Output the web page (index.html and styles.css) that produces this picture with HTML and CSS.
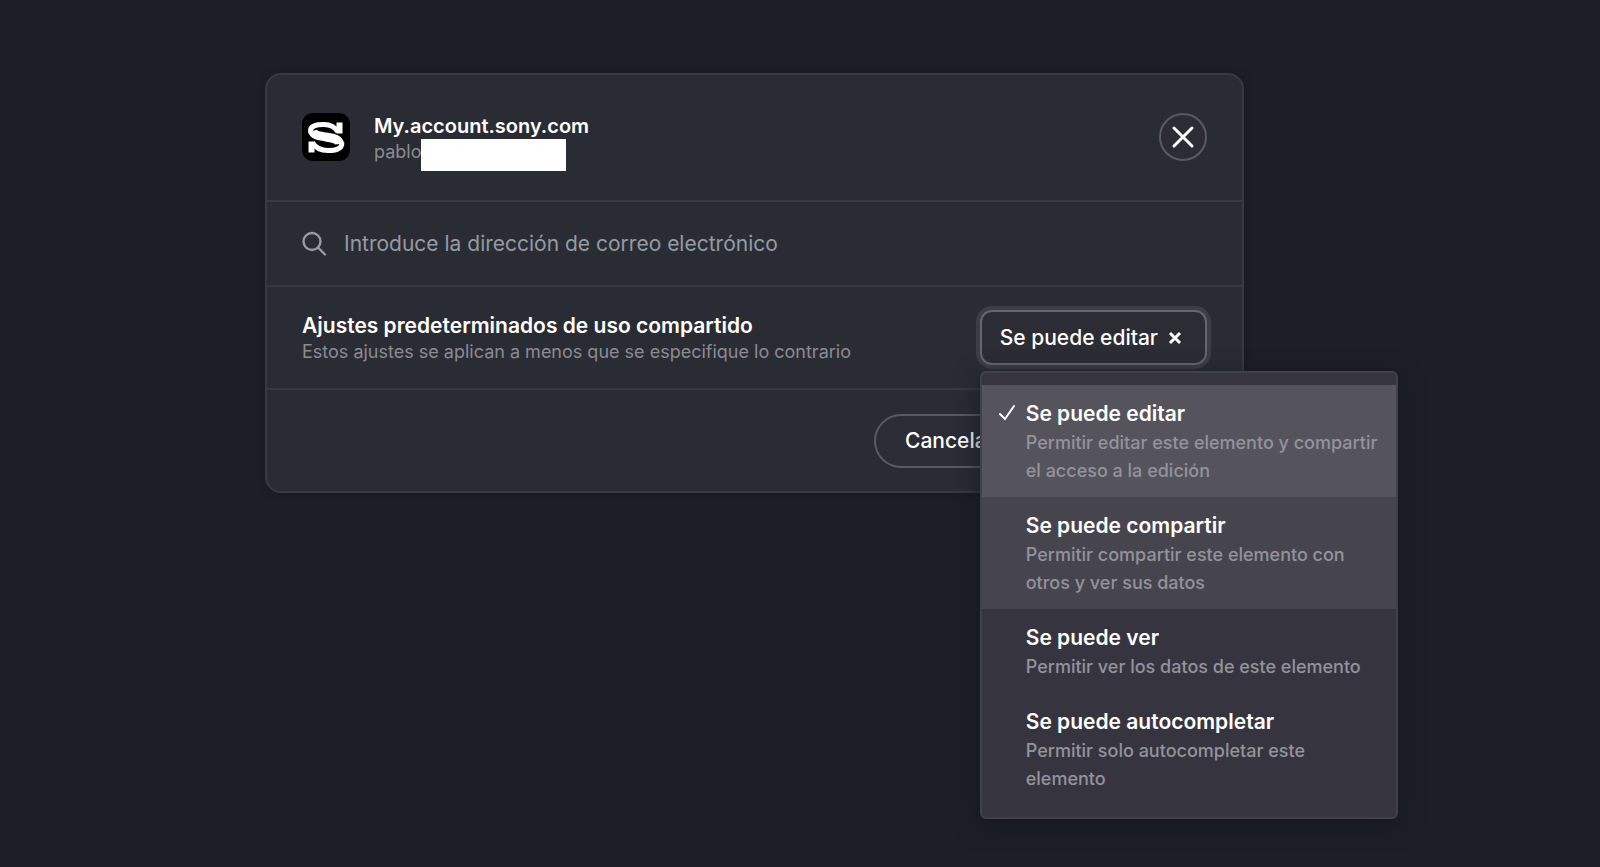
FILE: index.html
```html
<!DOCTYPE html>
<html lang="es">
<head>
<meta charset="utf-8">
<meta name="viewport" content="width=device-width, initial-scale=1">
<title>Compartir elemento</title>
<link rel="stylesheet" href="styles.css">
</head>
<body>
<main class="page">
  <section class="dialog" role="dialog" aria-labelledby="item-name">
    <header class="row header">
      <svg class="logo" viewBox="0 0 48 48" aria-hidden="true">
        <rect width="48" height="48" rx="11" fill="#000"/>
        <g fill="none" stroke="#fff">
          <path d="M10.500 18C12 23 19 22.800 24 24C30 25.200 37 25.500 37.500 31" stroke-width="9"/>
          <path d="M8.500 19C7.500 12.500 15 11.500 22 11.500C29 11.500 33 14 36 19M39.800 29.500C40.500 36.500 32.500 37.500 26 37.500C18.500 37.500 13.500 35 10.500 29.500" stroke-width="5"/>
          <path d="M37.500 9.500V20.500M9.500 28.500V39.500" stroke-width="6"/>
        </g>
      </svg>
      <div class="identity">
        <h1 class="title title-item" id="item-name">My.account.sony.com</h1>
        <p class="subtitle"><span class="email">pablo<span class="redaction"></span></span></p>
      </div>
      <button class="close" type="button" aria-label="Cerrar">
        <svg viewBox="0 0 24 24" aria-hidden="true"><path d="M3 3L21 21M21 3L3 21"/></svg>
      </button>
    </header>

    <div class="row search">
      <svg class="search-icon" viewBox="0 0 24 24" aria-hidden="true"><circle cx="10" cy="9.500" r="8.500"/><path d="M16 15.500L23 22.500"/></svg>
      <input class="search-input" type="email" aria-label="Correo electrónico" placeholder="Introduce la dirección de correo electrónico">
    </div>

    <div class="row settings">
      <div class="settings-text">
        <h2 class="title">Ajustes predeterminados de uso compartido</h2>
        <p class="subtitle">Estos ajustes se aplican a menos que se especifique lo contrario</p>
      </div>
      <div class="picker">
        <button class="picker-button" type="button" aria-haspopup="listbox" aria-expanded="true">
          Se puede editar
          <svg viewBox="0 0 14 14" aria-hidden="true"><path d="M2 2L12 12M12 2L2 12"/></svg>
        </button>
        <div class="menu" role="listbox" aria-label="Permisos">
          <button class="option selected" type="button" role="option" aria-selected="true">
            <svg class="check" viewBox="0 0 16 16" aria-hidden="true"><path d="M1 9L6 14L15 1"/></svg>
            <span class="option-name">Se puede editar</span>
            <span class="option-help">Permitir editar este elemento y compartir el acceso a la edición</span>
          </button>
          <button class="option hovered" type="button" role="option" aria-selected="false">
            <span class="option-name">Se puede compartir</span>
            <span class="option-help">Permitir compartir este elemento con otros y ver sus datos</span>
          </button>
          <button class="option" type="button" role="option" aria-selected="false">
            <span class="option-name">Se puede ver</span>
            <span class="option-help">Permitir ver los datos de este elemento</span>
          </button>
          <button class="option" type="button" role="option" aria-selected="false">
            <span class="option-name">Se puede autocompletar</span>
            <span class="option-help">Permitir solo autocompletar este elemento</span>
          </button>
        </div>
      </div>
    </div>

    <footer class="row actions">
      <button class="cancel" type="button">Cancelar</button>
    </footer>
  </section>
</main>
</body>
</html>
```

FILE: styles.css
```css
* {
  box-sizing: border-box;
}

body {
  margin: 0;
  min-height: 100vh;
  background: #1e1e27;
  color: #fff;
  font-family: Inter, "Liberation Sans", sans-serif;
  font-size: 21px;
}

button,
input {
  font: inherit;
  color: inherit;
}

h1,
h2,
p {
  margin: 0;
}

svg {
  display: block;
  flex: none;
}

.page {
  padding: 73px 356px 0 265px;
}

.dialog {
  border: 2px solid #393942;
  border-radius: 16px;
  background: #2a2c34;
  box-shadow: 0 0 8px rgba(20, 20, 30, 0.5);
}

.row {
  display: flex;
  align-items: center;
  padding: 0 35px;
}

.row + .row {
  border-top: 2px solid #393942;
}

.header {
  align-items: flex-start;
  padding-top: 38px;
  padding-bottom: 35px;
  gap: 24px;
}

.logo {
  width: 48px;
  height: 48px;
}

.identity,
.settings-text {
  flex: 1;
}

.settings-text {
  padding-top: 2px;
}

.title {
  font-size: 21px;
  line-height: 26px;
  font-weight: 600;
}

.title-item {
  font-size: 20px;
}

.subtitle {
  color: #8b8b92;
  font-size: 18px;
  line-height: 26px;
}

.email {
  position: relative;
}

.redaction {
  position: absolute;
  left: 100%;
  top: -2px;
  width: 145px;
  height: 32px;
  background: #fff;
}

.close {
  display: grid;
  place-items: center;
  width: 48px;
  height: 48px;
  padding: 0;
  border: 2px solid #5b5a63;
  border-radius: 50%;
  background: #2c2c36;
}

.close svg {
  width: 24px;
  height: 24px;
  fill: none;
  stroke: #fff;
  stroke-width: 3;
  stroke-linecap: round;
}

.search {
  height: 85px;
  gap: 18px;
}

.search-icon {
  width: 24px;
  height: 24px;
  fill: none;
  stroke: #999ba1;
  stroke-width: 2.4;
  stroke-linecap: round;
  overflow: visible;
}

.search-input {
  flex: 1;
  padding: 0;
  border: 0;
  outline: 0;
  background: none;
}

.search-input::placeholder {
  color: #949ba4;
  opacity: 1;
}

.settings {
  height: 103px;
}

.picker {
  position: relative;
}

.picker-button {
  display: flex;
  align-items: center;
  gap: 10px;
  height: 55px;
  padding: 0 23px 0 18px;
  border: 2px solid #67666f;
  border-radius: 12px;
  background: #2c2c35;
  box-shadow: 0 0 0 4px #3d3d47;
  font-weight: 500;
}

.picker-button svg {
  width: 14px;
  height: 14px;
  fill: none;
  stroke: #fff;
  stroke-width: 3;
}

.menu {
  position: absolute;
  z-index: 1;
  top: 61px;
  left: 0;
  width: 418px;
  padding: 12px 0;
  border: 2px solid #42414b;
  border-radius: 6px;
  background: #36353f;
  box-shadow: 0 6px 24px rgba(18, 24, 32, 0.8);
}

.option {
  position: relative;
  display: block;
  width: 100%;
  padding: 14px 16px 12px 44px;
  border: 0;
  background: none;
  text-align: left;
  line-height: 28px;
}

.selected {
  background: #55545d;
}

.hovered {
  background: #46454e;
}

.option-name,
.option-help {
  display: block;
}

.option-name {
  margin-bottom: 1px;
  font-weight: 600;
  line-height: 29px;
}

.option-help {
  color: #94939c;
  font-size: 18px;
  font-weight: 500;
}

.check {
  position: absolute;
  top: 20px;
  left: 17px;
  width: 16px;
  height: 16px;
  fill: none;
  stroke: #fff;
  stroke-width: 2;
  stroke-linecap: round;
}

.actions {
  height: 103px;
  padding-left: 607px;
}

.cancel {
  height: 54px;
  padding: 0 29px;
  border: 2px solid #5b5a63;
  border-radius: 27px;
  background: #2c2c35;
  font-weight: 500;
}
```
